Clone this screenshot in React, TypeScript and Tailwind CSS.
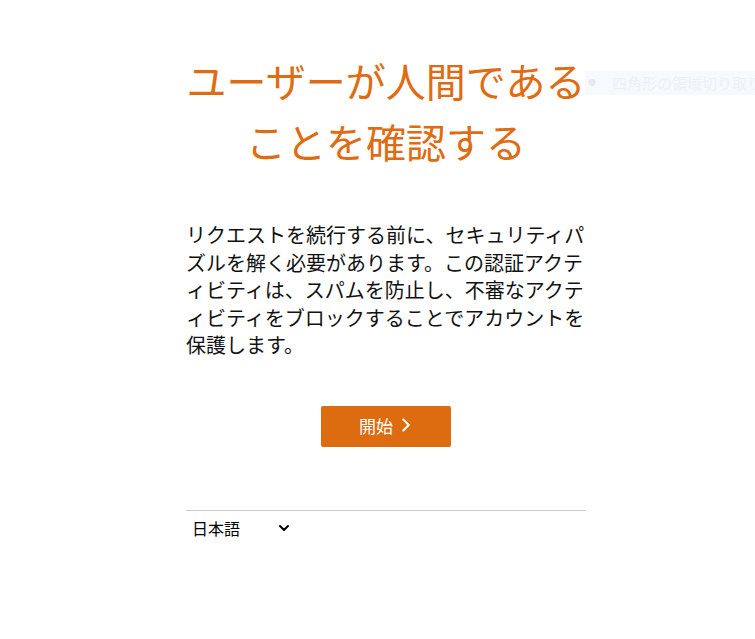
import { ChevronDown, ChevronRight } from 'lucide-react'

const font = { fontFamily: '"Noto Sans CJK JP", "Noto Sans", sans-serif' }

export default function App() {
  return (
    <div className="relative min-h-[639px] w-full bg-white" style={font}>
      <div className="ml-[186px] w-[400px] pt-[50px]">
        <h1 className="text-center text-[40px] leading-[61px] font-normal text-[#df6b12]">
          ユーザーが人間である
          <br />
          ことを確認する
        </h1>

        <p className="mt-[49px] text-[20px] leading-[27.5px] text-[#111]">
          リクエストを続行する前に、セキュリティパズルを解く必要があります。この認証アクティビティは、スパムを防止し、不審なアクティビティをブロックすることでアカウントを保護します。
        </p>

        <div className="mt-[47px] flex justify-center">
          <button className="flex h-[41px] w-[130px] items-center justify-center gap-[2px] rounded-[2px] bg-[#dd6b10] pl-[4px] text-[17px] text-white">
            開始
            <ChevronRight size={22} strokeWidth={2.25} className="-mt-[3px]" />
          </button>
        </div>

        <div className="mt-[63px] border-t border-[#cccccc] pt-[5px]">
          <div className="flex w-[106px] items-center justify-between pl-[6px] text-[16px] leading-[24px] text-black">
            <span>日本語</span>
            <ChevronDown size={16} strokeWidth={3} />
          </div>
        </div>
      </div>

      {/* faint overlay tooltip on the right */}
      <div className="absolute left-[585px] top-[71px] flex h-[24px] w-[170px] items-center gap-[10px] overflow-hidden whitespace-nowrap bg-[#f6f9fd] pl-[3px] text-[15px] text-[#eef1f4]">
        <span className="text-[8px] text-[#e6eaef]">●</span>
        <span className="pl-[6px]">四角形の領域切り取り(R</span>
      </div>
    </div>
  )
}
